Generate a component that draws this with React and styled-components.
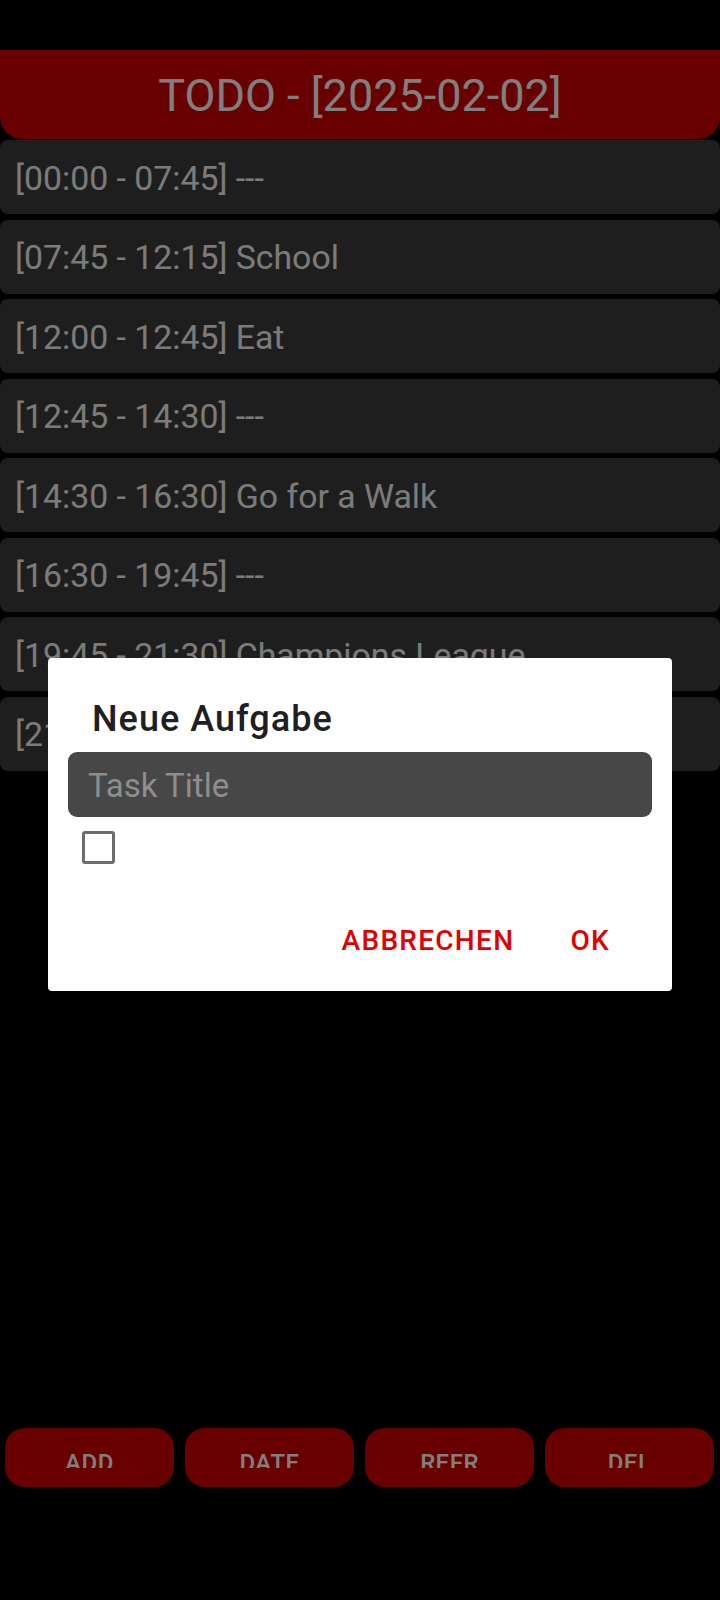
import React from "react";
import styled, { createGlobalStyle } from "styled-components";

const tasks = [
  "[00:00 - 07:45] ---",
  "[07:45 - 12:15] School",
  "[12:00 - 12:45] Eat",
  "[12:45 - 14:30] ---",
  "[14:30 - 16:30] Go for a Walk",
  "[16:30 - 19:45] ---",
  "[19:45 - 21:30] Champions League",
  "[21:30 - 24:00] ---",
];

const navItems = ["ADD", "DATE", "REFR", "DEL"];

export default function App() {
  return (
    <>
      <GlobalStyle />
      <Page>
        <Header>
          <h1>TODO - [2025-02-02]</h1>
        </Header>
        <TaskList>
          {tasks.map((t, i) => (
            <TaskRow key={i}>{t}</TaskRow>
          ))}
        </TaskList>
        <BottomBar>
          {navItems.map((n) => (
            <NavButton key={n}>
              <span>{n}</span>
            </NavButton>
          ))}
        </BottomBar>
      </Page>

      <Scrim>
        <Dialog>
          <DialogTitle>Neue Aufgabe</DialogTitle>
          <TitleInput placeholder="Task Title" />
          <CheckBox />
          <Actions>
            <ActionButton>Abbrechen</ActionButton>
            <ActionButton>OK</ActionButton>
          </Actions>
        </Dialog>
      </Scrim>
    </>
  );
}

const medium = `"Roboto Medium", Roboto, "Noto Sans", sans-serif`;

const GlobalStyle = createGlobalStyle`
  html, body {
    margin: 0;
    padding: 0;
    background: #000;
    font-family: Roboto, "Noto Sans", sans-serif;
  }
  * {
    box-sizing: border-box;
  }
`;

const Page = styled.div`
  display: flex;
  flex-direction: column;
  min-height: 1600px;
  padding-top: 50px;
  background: #000;
`;

const Header = styled.div`
  height: 89px;
  background: #d00000;
  border-radius: 0 0 22px 22px;
  display: flex;
  align-items: center;
  justify-content: center;

  h1 {
    margin: 0;
    font-size: 45px;
    font-weight: 400;
    color: #ffffff;
    line-height: 1;
    padding-top: 2px;
  }
`;

const TaskList = styled.div`
  display: flex;
  flex-direction: column;
  gap: 5.5px;
  margin-top: 1px;
`;

const TaskRow = styled.div`
  height: 74px;
  background: #3d3d3d;
  border-radius: 8px;
  display: flex;
  align-items: center;
  padding: 2px 15px 0;
  font-size: 33.8px;
  color: #f6f6f6;
  white-space: nowrap;
`;

const BottomBar = styled.div`
  margin-top: auto;
  display: flex;
  gap: 11px;
  padding: 0 6px 113px 5px;
`;

const NavButton = styled.div`
  flex: 1;
  height: 59px;
  background: #d00000;
  border-radius: 20px;
  display: flex;
  justify-content: center;

  /* label is cut off by the button's content box, as in the app */
  span {
    display: block;
    height: 40px;
    overflow: hidden;
    padding-top: 23px;
    font-family: ${medium};
    font-size: 24px;
    line-height: 24px;
    font-weight: 500;
    letter-spacing: 0.5px;
    color: #ffffff;
  }
`;

const Scrim = styled.div`
  position: fixed;
  inset: 0;
  background: rgba(0, 0, 0, 0.5);
  display: flex;
  justify-content: center;
  align-items: flex-start;
  padding-top: 658px;
`;

const Dialog = styled.div`
  width: 624px;
  background: #fff;
  border-radius: 4px;
  padding: 40px 20px 26px;
  display: flex;
  flex-direction: column;
`;

const DialogTitle = styled.h2`
  margin: 0 0 12px 24px;
  font-family: ${medium};
  font-size: 36px;
  line-height: 42px;
  font-weight: 500;
  letter-spacing: 1px;
  color: #202020;
`;

const TitleInput = styled.input`
  height: 65px;
  border: none;
  outline: none;
  border-radius: 9px;
  background: #474747;
  padding: 2px 20px 0;
  font-family: Roboto, sans-serif;
  font-size: 33px;
  color: #fff;

  &::placeholder {
    color: #8e8e8e;
  }
`;

const CheckBox = styled.div`
  width: 33px;
  height: 33px;
  margin: 14px 0 0 14px;
  border: 3px solid #6c6c6c;
  border-radius: 3px;
`;

const Actions = styled.div`
  display: flex;
  justify-content: flex-end;
  gap: 20px;
  margin-top: 53px;
  padding-right: 24px;
`;

const ActionButton = styled.button`
  height: 48px;
  padding: 0 18px;
  border: none;
  background: none;
  font-family: ${medium};
  font-size: 28px;
  line-height: 28px;
  font-weight: 500;
  letter-spacing: 1.3px;
  text-transform: uppercase;
  color: #e00000;
`;
